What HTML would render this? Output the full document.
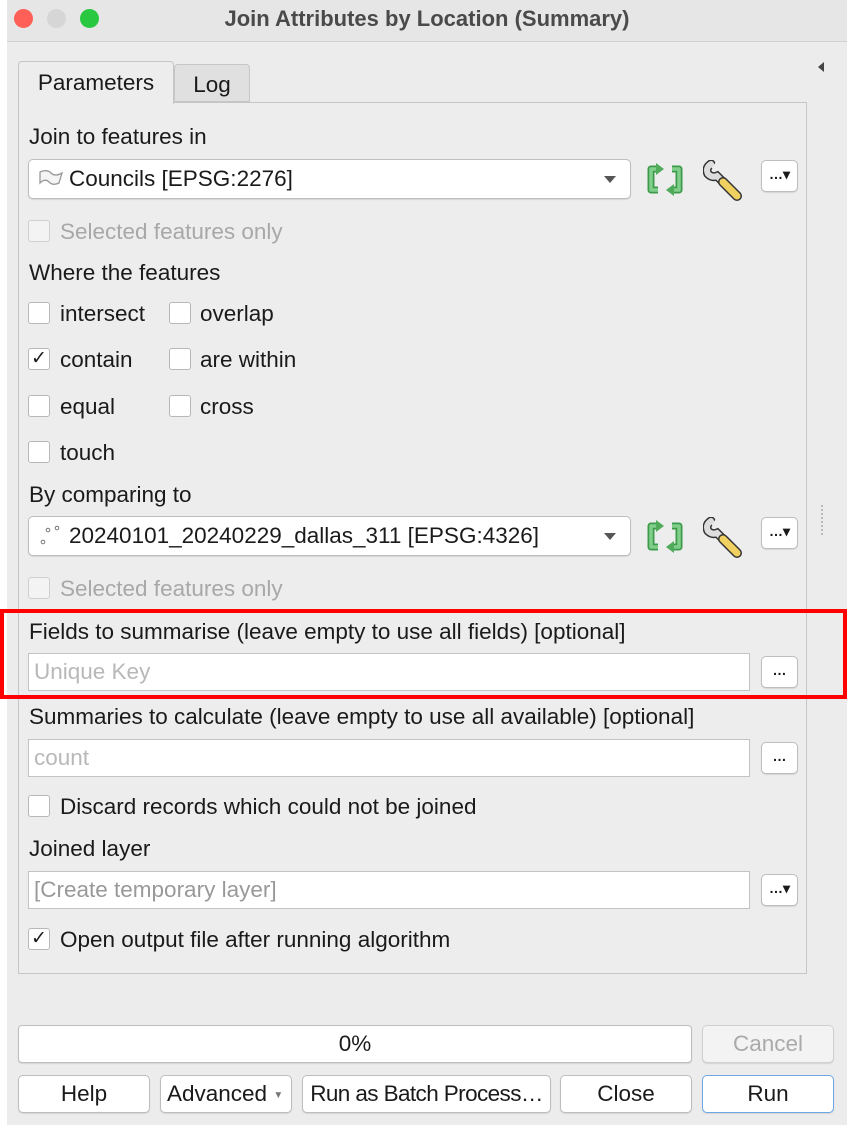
<!DOCTYPE html>
<html><head><style>
*{box-sizing:border-box;margin:0;padding:0}
body{width:847px;height:1125px;background:#fff;font-family:"Liberation Sans",sans-serif;font-size:22.5px;color:#1a1a1a;position:relative;overflow:hidden}
.win{position:absolute;left:7px;top:0;width:840px;height:1125px;background:#ececec}
.title{position:absolute;left:0;top:0;width:840px;height:42px;background:#e6e6e6;border-bottom:1px solid #d0d0d0;text-align:center;line-height:38px;font-weight:bold;color:#4a4a4a;font-size:22px}
.dot{position:absolute;top:9px;width:19px;height:19px;border-radius:50%}
.a{position:absolute;white-space:nowrap;line-height:24px}
.panel{position:absolute;left:18px;top:102px;width:789px;height:872px;border:1px solid #c6c6c6;background:#ededed}
.tab{position:absolute;height:42px;border:1px solid #c6c6c6;border-bottom:none;border-radius:4px 4px 0 0;text-align:center;line-height:42px}
.combo{position:absolute;height:40px;background:#fff;border:1px solid #bdbdbd;border-radius:5px;box-shadow:0 1px 1px rgba(0,0,0,.1);line-height:38px;padding-left:40px}
.combo:after{content:"";position:absolute;right:14px;top:16px;border:6px solid transparent;border-top:7px solid #555}
.edit{position:absolute;height:38px;background:#fff;border:1px solid #c3c3c3;line-height:36px;padding-left:5px;color:#b8b8b8}
.btn{position:absolute;height:38px;background:#fff;border:1px solid #bdbdbd;border-radius:5px;text-align:center;line-height:36px;box-shadow:0 1px 1px rgba(0,0,0,.1)}
.sm{width:37px;height:32px;font-size:14px;line-height:26px;font-weight:bold}
.cb{position:absolute;width:22px;height:22px;border:1px solid #b8b8b8;border-radius:3px;background:#fff;font-size:19px;line-height:20px;text-align:center}
.dis{color:#a8a8a8}
</style></head><body>
<div class="win">
<div class="title">Join Attributes by Location (Summary)</div>
<div class="dot" style="left:7px;background:#fe5f57"></div>
<div class="dot" style="left:40px;background:#d6d6d6"></div>
<div class="dot" style="left:73px;background:#28c840"></div>
<div class="a" style="left:806px;top:62px;border:5px solid transparent;border-right:6px solid #444;width:0;height:0"></div>
<div class="a" style="left:814px;top:505px;width:1px;height:30px;border-left:2px dotted #bbb"></div>
</div>
<div class="panel"></div>
<div class="tab" style="left:18px;top:61px;width:156px;background:#ededed;height:43px">Parameters</div>
<div class="tab" style="left:174px;top:64px;width:76px;background:#e0e0e0;height:38px;line-height:40px;border-bottom:1px solid #c6c6c6">Log</div>

<div class="a" style="left:29px;top:125px">Join to features in</div>
<div class="combo" style="left:28px;top:159px;width:603px">Councils [EPSG:2276]</div>
<svg class="a" style="left:37px;top:168px" width="28" height="20"><path d="M3 4 Q10 1 14 5 Q18 9 25 5 L22 15 Q16 18 12 14 Q8 10 3 15 Z" fill="#f4f4f4" stroke="#999" stroke-width="1.3"/></svg>

<svg class="a" style="left:645px;top:162px" width="40" height="35"><g fill="none" stroke="#3e9a4a" stroke-width="7" stroke-linejoin="round"><path d="M13 7 H6 V28 H13 M27 7 H34 V28 H27"/></g><g fill="none" stroke="#7fcf8a" stroke-width="3.5" stroke-linejoin="round"><path d="M13 7 H6 V28 H13 M27 7 H34 V28 H27"/></g><path d="M11 1 L19 7 L11 13Z M29 22 L21 28 L29 34Z" fill="#4faa5a"/></svg>
<svg class="a" style="left:703px;top:160px" width="44" height="42"><path d="M8 4 Q2 8 5 14 Q9 18 14 16 L32 34" stroke="#333" stroke-width="9" fill="none" stroke-linecap="round"/><path d="M8 4 Q2 8 5 14 Q9 18 14 16 L32 34" stroke="#ddd" stroke-width="6" fill="none" stroke-linecap="round"/><path d="M20 22 L34 36" stroke="#333" stroke-width="10" stroke-linecap="round"/><path d="M20 22 L34 36" stroke="#f0d060" stroke-width="7" stroke-linecap="round"/><path d="M14 4 L10 9" stroke="#ececec" stroke-width="4"/></svg>
<div class="btn sm" style="left:761px;top:160px">…▾</div>

<div class="cb" style="left:28px;top:220px;border-color:#d0d0d0;background:#f3f3f3"></div>
<div class="a dis" style="left:60px;top:220px">Selected features only</div>
<div class="a" style="left:29px;top:261px">Where the features</div>
<div class="cb" style="left:28px;top:302px"></div><div class="a" style="left:60px;top:302px">intersect</div>
<div class="cb" style="left:169px;top:302px"></div><div class="a" style="left:200px;top:302px">overlap</div>
<div class="cb" style="left:28px;top:348px">✓</div><div class="a" style="left:60px;top:348px">contain</div>
<div class="cb" style="left:169px;top:348px"></div><div class="a" style="left:200px;top:348px">are within</div>
<div class="cb" style="left:28px;top:395px"></div><div class="a" style="left:60px;top:395px">equal</div>
<div class="cb" style="left:169px;top:395px"></div><div class="a" style="left:200px;top:395px">cross</div>
<div class="cb" style="left:28px;top:441px"></div><div class="a" style="left:60px;top:441px">touch</div>
<div class="a" style="left:29px;top:483px">By comparing to</div>
<div class="combo" style="left:28px;top:516px;width:603px">20240101_20240229_dallas_311 [EPSG:4326]</div>
<svg class="a" style="left:38px;top:524px" width="24" height="24"><circle cx="5" cy="18" r="1.8" fill="none" stroke="#777"/><circle cx="10" cy="6" r="1.8" fill="none" stroke="#777"/><circle cx="19" cy="4" r="1.8" fill="none" stroke="#777"/></svg>
<svg class="a" style="left:645px;top:519px" width="40" height="35"><g fill="none" stroke="#3e9a4a" stroke-width="7" stroke-linejoin="round"><path d="M13 7 H6 V28 H13 M27 7 H34 V28 H27"/></g><g fill="none" stroke="#7fcf8a" stroke-width="3.5" stroke-linejoin="round"><path d="M13 7 H6 V28 H13 M27 7 H34 V28 H27"/></g><path d="M11 1 L19 7 L11 13Z M29 22 L21 28 L29 34Z" fill="#4faa5a"/></svg>
<svg class="a" style="left:703px;top:517px" width="44" height="42"><path d="M8 4 Q2 8 5 14 Q9 18 14 16 L32 34" stroke="#333" stroke-width="9" fill="none" stroke-linecap="round"/><path d="M8 4 Q2 8 5 14 Q9 18 14 16 L32 34" stroke="#ddd" stroke-width="6" fill="none" stroke-linecap="round"/><path d="M20 22 L34 36" stroke="#333" stroke-width="10" stroke-linecap="round"/><path d="M20 22 L34 36" stroke="#f0d060" stroke-width="7" stroke-linecap="round"/><path d="M14 4 L10 9" stroke="#ececec" stroke-width="4"/></svg>
<div class="btn sm" style="left:761px;top:517px">…▾</div>
<div class="cb" style="left:28px;top:577px;border-color:#d0d0d0;background:#f3f3f3"></div>
<div class="a dis" style="left:60px;top:577px">Selected features only</div>

<div class="a" style="left:29px;top:620px">Fields to summarise (leave empty to use all fields) [optional]</div>
<div class="edit" style="left:28px;top:653px;width:722px">Unique Key</div>
<div class="btn sm" style="left:761px;top:656px">…</div>
<div class="a" style="left:0;top:609px;width:847px;height:90px;border:4px solid #f00"></div>

<div class="a" style="left:29px;top:705px">Summaries to calculate (leave empty to use all available) [optional]</div>
<div class="edit" style="left:28px;top:739px;width:722px">count</div>
<div class="btn sm" style="left:761px;top:742px">…</div>
<div class="cb" style="left:28px;top:795px"></div><div class="a" style="left:60px;top:795px">Discard records which could not be joined</div>
<div class="a" style="left:29px;top:837px">Joined layer</div>
<div class="edit" style="left:28px;top:871px;width:722px;color:#999">[Create temporary layer]</div>
<div class="btn sm" style="left:761px;top:874px">…▾</div>
<div class="cb" style="left:28px;top:928px">✓</div><div class="a" style="left:60px;top:928px">Open output file after running algorithm</div>

<div class="btn" style="left:18px;top:1025px;width:674px;border-radius:4px">0%</div>
<div class="btn" style="left:702px;top:1025px;width:132px;color:#aaa;background:#f3f3f3;border-color:#d0d0d0">Cancel</div>
<div class="btn" style="left:18px;top:1075px;width:132px">Help</div>
<div class="btn" style="left:160px;top:1075px;width:132px;text-align:left;padding-left:6px">Advanced <span style="font-size:10px;color:#777;vertical-align:3px">▼</span></div>
<div class="btn" style="left:302px;top:1075px;width:249px;letter-spacing:-0.6px">Run as Batch Process…</div>
<div class="btn" style="left:560px;top:1075px;width:132px">Close</div>
<div class="btn" style="left:702px;top:1075px;width:132px;border-color:#6aa8e8">Run</div>
</body></html>
